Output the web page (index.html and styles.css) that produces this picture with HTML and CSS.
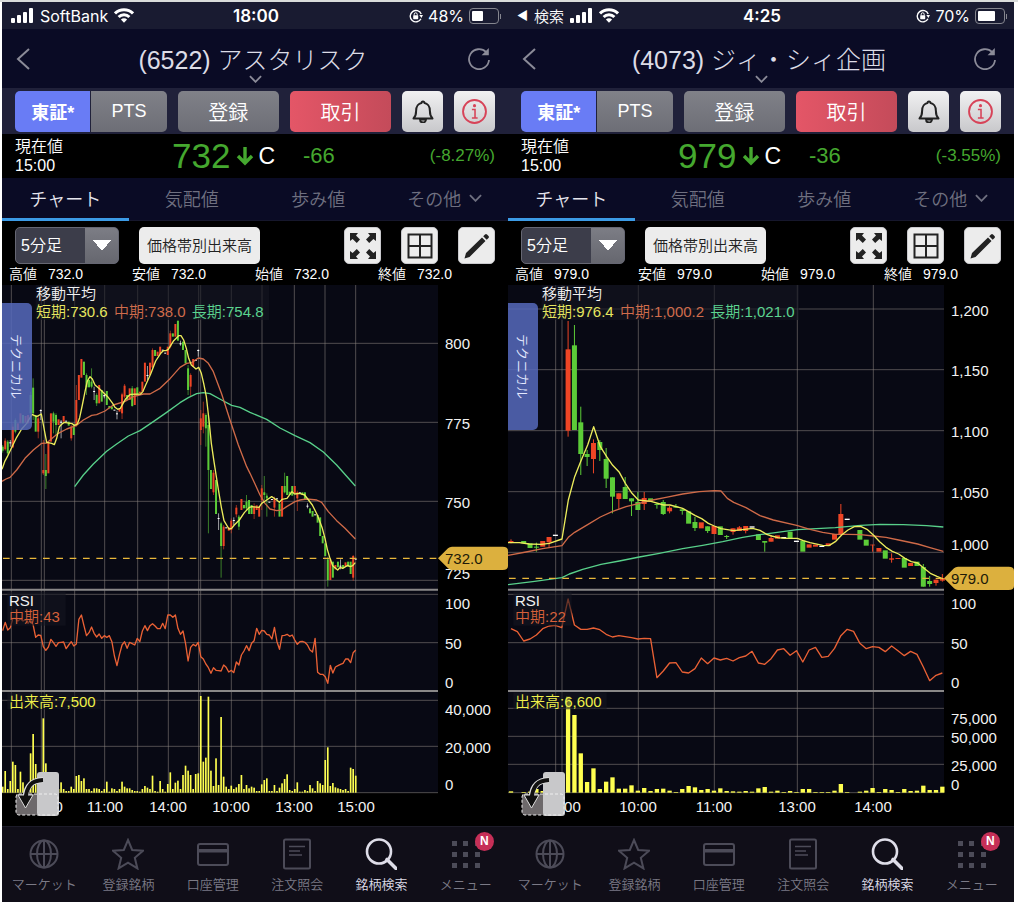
FILE: index.html
```html
<!DOCTYPE html>
<html lang="ja">
<head>
  <meta charset="UTF-8" />
  <meta name="viewport" content="width=device-width, initial-scale=1" />
  <title>株価チャート</title>
  <link rel="stylesheet" href="styles.css">
</head>
<body>

  <svg class="defs" aria-hidden="true">
    <symbol id="signal" viewBox="0 0 23 15">
      <rect x="0" y="10" width="4" height="5" rx="1"/><rect x="6" y="7" width="4" height="8" rx="1"/>
      <rect x="12" y="4" width="4" height="11" rx="1"/><rect x="18" y="0" width="4" height="15" rx="1"/>
    </symbol>
    <symbol id="wifi" viewBox="0 0 20 15">
      <g fill="none" stroke="currentColor" stroke-width="3"><path d="M1 5.4a12.8 12.8 0 0 1 18 0"/><path d="M4.6 9a7.8 7.8 0 0 1 10.8 0"/></g>
      <path d="M10 14.8 6.9 11.6a4.4 4.4 0 0 1 6.2 0z"/>
    </symbol>
    <symbol id="lock" viewBox="0 0 14 14">
      <path d="M12.2 5A5.7 5.7 0 1 0 12 9.8" fill="none" stroke="currentColor" stroke-width="1.4"/>
      <path d="M10.3 6h3.7l-1.6 3z"/><rect x="4.2" y="6.2" width="5" height="4" rx=".6"/>
      <path d="M5.2 6.5V5.3a1.5 1.5 0 0 1 3 0v1.2" fill="none" stroke="currentColor"/>
    </symbol>
    <symbol id="back" viewBox="0 0 14 22"><path d="M13 1 2 11l11 10" fill="none" stroke="currentColor" stroke-width="2"/></symbol>
    <symbol id="down" viewBox="0 0 14 8"><path d="M1 1l6 6 6-6" fill="none" stroke="currentColor" stroke-width="2"/></symbol>
    <symbol id="reload" viewBox="0 0 22 22">
      <path d="M18.2 4.2A10 10 0 1 0 21 12" fill="none" stroke="currentColor" stroke-width="1.8"/>
      <path d="M20.8 0v7.2h-7.2z"/>
    </symbol>
    <symbol id="bell" viewBox="0 0 22 24">
      <path d="M1.5 19.5c2-2 2.6-3.4 2.6-7.5 0-4.7 2.6-7.6 5.4-8a1.5 1.5 0 1 1 3 0c2.8.4 5.4 3.3 5.4 8 0 4.1.6 5.5 2.6 7.5z" fill="none" stroke="currentColor" stroke-width="2" stroke-linejoin="round"/>
      <path d="M8 20.5a3 3 0 0 0 6 0z" fill="none" stroke="currentColor" stroke-width="1.8"/>
    </symbol>
    <symbol id="info" viewBox="0 0 24 24">
      <circle cx="12" cy="12" r="11" fill="none" stroke="currentColor" stroke-width="1.8"/>
      <circle cx="12" cy="6.4" r="1.5"/><path d="M9.5 10h3v8M9.5 18.2h5.5" fill="none" stroke="currentColor" stroke-width="1.5"/>
    </symbol>
    <symbol id="drop" viewBox="0 0 18 19"><path d="M9 0v16M2 9l7 7 7-7" fill="none" stroke="currentColor" stroke-width="3.4"/></symbol>
    <symbol id="expand" viewBox="0 0 26 26">
      <g id="arrow"><path d="M0 0h8L6 2.4l4 4.2L6.8 10 2.6 6 0 8z"/></g>
      <use href="#arrow" transform="translate(26 0) scale(-1 1)"/><use href="#arrow" transform="translate(0 26) scale(1 -1)"/><use href="#arrow" transform="translate(26 26) scale(-1 -1)"/>
    </symbol>
    <symbol id="grid" viewBox="0 0 26 26"><path d="M1.5 1.5h23v23h-23zM13 2v22M2 13h22" fill="none" stroke="currentColor" stroke-width="2"/></symbol>
    <symbol id="pencil" viewBox="0 0 26 26"><path d="M.5 25.5L2 20 18 4.5 21.5 8l-16 16zM19.2 3.3L21 1.5a1.500 1.500 0 0 1 2 0L24.500 3a1.500 1.500 0 0 1 0 2l-1.800 1.800z"/></symbol>
    <symbol id="globe" viewBox="0 0 32 32">
      <g fill="none" stroke="currentColor" stroke-width="2"><circle cx="16" cy="16" r="13.5"/><ellipse cx="16" cy="16" rx="7" ry="13.5"/><path d="M16 2.5v27M2.5 16h27"/></g>
    </symbol>
    <symbol id="star" viewBox="0 0 32 32"><path d="M16 2l4.2 10 10.8.8-8.2 7 2.6 10.6L16 24.6l-9.4 5.8 2.6-10.6-8.2-7 10.8-.8z" fill="none" stroke="currentColor" stroke-width="2"/></symbol>
    <symbol id="card" viewBox="0 0 32 32"><rect x="1" y="6" width="30" height="21" rx="2" fill="none" stroke="currentColor" stroke-width="2"/><path d="M1 11h30v3.5H1z"/></symbol>
    <symbol id="note" viewBox="0 0 32 32">
      <rect x="3" y="1.5" width="26" height="29" rx="1.5" fill="none" stroke="currentColor" stroke-width="2"/>
      <path d="M8 8.5h16M8 13h11M8 17h13" fill="none" stroke="currentColor" stroke-width="1.5"/>
    </symbol>
    <symbol id="search" viewBox="0 0 32 32">
      <circle cx="14" cy="13.5" r="12" fill="none" stroke="currentColor" stroke-width="2.6"/>
      <path d="M22 21.5l9 9" fill="none" stroke="currentColor" stroke-width="3.6" stroke-linecap="round"/>
    </symbol>
    <symbol id="menu" viewBox="0 0 32 32">
      <path d="M2 3h5v5H2zM13 3h5v5h-5zM25 3h5v5h-5zM2 14h5v5H2zM13 14h5v5h-5zM25 14h5v5h-5zM2 25h5v5H2zM13 25h5v5h-5zM25 25h5v5h-5z"/>
    </symbol>
    <symbol id="rotate" viewBox="0 0 44 44">
      <path d="M1 22h21v21H4q-3 0-3-3z" fill="#6d696b"/>
      <rect x="22" y="0" width="22" height="44" rx="3" fill="#c8c8ca"/>
      <rect x="1" y="22" width="42" height="21" rx="3" fill="none" stroke="#eee" stroke-dasharray="3 2"/>
      <path d="M28 8C17 8.5 11.5 13 10.5 25" fill="none" stroke="#ddd" stroke-width="6"/>
      <path d="M3 23L10.500 36 18 23z" fill="#111" stroke="#ddd"/>
      <path d="M28 8C17 8.5 11.5 13 10.5 28" fill="none" stroke="#111" stroke-width="4"/>
    </symbol>
  </svg>

  <main class="screens">

    <section class="phone">
      <div class="status">
        <div class="status-left">
          <svg class="signal"><use href="#signal"/></svg>
          <span>SoftBank</span>
          <svg class="wifi"><use href="#wifi"/></svg>
        </div>
        <b>18:00</b>
        <div class="status-right">
          <svg class="lock"><use href="#lock"/></svg>
          <span>48%</span>
          <span class="battery"><i style="width: 46%"></i></span>
        </div>
      </div>

      <header class="title">
        <button class="plain" aria-label="戻る"><svg class="back"><use href="#back"/></svg></button>
        <h1>(6522) アスタリスク</h1>
        <button class="plain end" aria-label="更新"><svg class="reload"><use href="#reload"/></svg></button>
        <svg class="title-down"><use href="#down"/></svg>
      </header>

      <div class="actions">
        <div class="market">
          <button class="on">東証*</button>
          <button>PTS</button>
        </div>
        <button class="btn">登録</button>
        <button class="btn trade">取引</button>
        <button class="btn square" aria-label="通知"><svg class="bell"><use href="#bell"/></svg></button>
        <button class="btn square info" aria-label="情報"><svg class="info-icon"><use href="#info"/></svg></button>
      </div>

      <div class="price">
        <div class="price-label">現在値<br>15:00</div>
        <div class="price-now"><strong>732</strong><svg class="drop"><use href="#drop"/></svg><span>C</span></div>
        <div class="price-diff">-66</div>
        <div class="price-rate">(-8.27%)</div>
      </div>

      <nav class="tabs">
        <a href="#" class="on">チャート</a>
        <a href="#">気配値</a>
        <a href="#">歩み値</a>
        <a href="#">その他 <svg class="down"><use href="#down"/></svg></a>
      </nav>

      <div class="tools">
        <select aria-label="足種"><option>5分足</option></select>
        <button class="tool wide">価格帯別出来高</button>
        <button class="tool icon first" aria-label="全画面"><svg><use href="#expand"/></svg></button>
        <button class="tool icon" aria-label="分割"><svg><use href="#grid"/></svg></button>
        <button class="tool icon" aria-label="描画"><svg><use href="#pencil"/></svg></button>
      </div>

      <dl class="ohlc">
        <div><dt>高値</dt><dd>732.0</dd></div>
        <div><dt>安値</dt><dd>732.0</dd></div>
        <div><dt>始値</dt><dd>732.0</dd></div>
        <div><dt>終値</dt><dd>732.0</dd></div>
      </dl>

      <div class="chart">
        <svg id="chart-6522" viewBox="2 5 506 541"></svg>
        <button class="technical">テクニカル</button>
        <button class="rotate" aria-label="画面回転"><svg><use href="#rotate"/></svg></button>
      </div>

      <nav class="menu">
        <a href="#"><svg><use href="#globe"/></svg>マーケット</a>
        <a href="#"><svg><use href="#star"/></svg>登録銘柄</a>
        <a href="#"><svg><use href="#card"/></svg>口座管理</a>
        <a href="#"><svg><use href="#note"/></svg>注文照会</a>
        <a href="#" class="on"><svg><use href="#search"/></svg>銘柄検索</a>
        <a href="#"><svg><use href="#menu"/></svg>メニュー<span class="badge">N</span></a>
      </nav>
    </section>

    <section class="phone">
      <div class="status">
        <div class="status-left">
          <span class="return">◀</span>
          <span class="return-label">検索</span>
          <svg class="signal"><use href="#signal"/></svg>
          <svg class="wifi"><use href="#wifi"/></svg>
        </div>
        <b>4:25</b>
        <div class="status-right">
          <svg class="lock"><use href="#lock"/></svg>
          <span>70%</span>
          <span class="battery"><i style="width: 70%"></i></span>
        </div>
      </div>

      <header class="title">
        <button class="plain" aria-label="戻る"><svg class="back"><use href="#back"/></svg></button>
        <h1>(4073) ジィ・シィ企画</h1>
        <button class="plain end" aria-label="更新"><svg class="reload"><use href="#reload"/></svg></button>
        <svg class="title-down"><use href="#down"/></svg>
      </header>

      <div class="actions">
        <div class="market">
          <button class="on">東証*</button>
          <button>PTS</button>
        </div>
        <button class="btn">登録</button>
        <button class="btn trade">取引</button>
        <button class="btn square" aria-label="通知"><svg class="bell"><use href="#bell"/></svg></button>
        <button class="btn square info" aria-label="情報"><svg class="info-icon"><use href="#info"/></svg></button>
      </div>

      <div class="price">
        <div class="price-label">現在値<br>15:00</div>
        <div class="price-now"><strong>979</strong><svg class="drop"><use href="#drop"/></svg><span>C</span></div>
        <div class="price-diff">-36</div>
        <div class="price-rate">(-3.55%)</div>
      </div>

      <nav class="tabs">
        <a href="#" class="on">チャート</a>
        <a href="#">気配値</a>
        <a href="#">歩み値</a>
        <a href="#">その他 <svg class="down"><use href="#down"/></svg></a>
      </nav>

      <div class="tools">
        <select aria-label="足種"><option>5分足</option></select>
        <button class="tool wide">価格帯別出来高</button>
        <button class="tool icon first" aria-label="全画面"><svg><use href="#expand"/></svg></button>
        <button class="tool icon" aria-label="分割"><svg><use href="#grid"/></svg></button>
        <button class="tool icon" aria-label="描画"><svg><use href="#pencil"/></svg></button>
      </div>

      <dl class="ohlc">
        <div><dt>高値</dt><dd>979.0</dd></div>
        <div><dt>安値</dt><dd>979.0</dd></div>
        <div><dt>始値</dt><dd>979.0</dd></div>
        <div><dt>終値</dt><dd>979.0</dd></div>
      </dl>

      <div class="chart">
        <svg id="chart-4073" viewBox="2 5 506 541"></svg>
        <button class="technical">テクニカル</button>
        <button class="rotate" aria-label="画面回転"><svg><use href="#rotate"/></svg></button>
      </div>

      <nav class="menu">
        <a href="#"><svg><use href="#globe"/></svg>マーケット</a>
        <a href="#"><svg><use href="#star"/></svg>登録銘柄</a>
        <a href="#"><svg><use href="#card"/></svg>口座管理</a>
        <a href="#"><svg><use href="#note"/></svg>注文照会</a>
        <a href="#" class="on"><svg><use href="#search"/></svg>銘柄検索</a>
        <a href="#"><svg><use href="#menu"/></svg>メニュー<span class="badge">N</span></a>
      </nav>
    </section>

  </main>

  <script src="chart.js"></script>
</body>
</html>
```
FILE: styles.css
```css
* {
  box-sizing: border-box;
}
body {
  margin: 0;
  padding: 0 4px 0 2px;
  border-top: 2px solid #d9dcdb;
  background: #fff;
  color: #fff;
  font-family: "Liberation Sans", "Noto Sans CJK JP", sans-serif;
  font-weight: 350;
}
button, select {
  font-family: inherit;
  font-weight: inherit;
  border: none;
  padding: 0;
  cursor: pointer;
}
a {
  color: inherit;
  text-decoration: none;
}
svg {
  display: block;
  fill: currentColor;
}
.defs {
  position: absolute;
  width: 0;
  height: 0;
}
.screens {
  display: grid;
  grid-template-columns: 1fr 1fr;
}
.phone {
  min-width: 0;
  background: #000;
}

/* status bar */
.status {
  display: grid;
  grid-template-columns: 1fr auto 1fr;
  align-items: center;
  height: 27px;
  padding: 0 7px 0 9px;
  background: #191b31;
  font-family: Inter, "Noto Sans CJK JP", sans-serif;
  font-size: 16px;
  font-weight: 400;
}
.status b {
  font-size: 17px;
  font-weight: 600;
}
.status-left, .status-right {
  display: flex;
  align-items: center;
  gap: 6px;
}
.status-right {
  justify-content: flex-end;
  gap: 5px;
}
.return {
  font-size: 12px;
}
.return-label {
  font-size: 15px;
  font-weight: 350;
}
.signal {
  width: 23px;
  height: 15px;
}
.wifi {
  width: 20px;
  height: 15px;
}
.lock {
  width: 14px;
  height: 14px;
}
.battery {
  position: relative;
  width: 30px;
  height: 16px;
  padding: 2px;
  margin-right: 2px;
  border: 1px solid #85868f;
  border-radius: 4px;
}
.battery i {
  display: block;
  height: 100%;
  background: #fff;
  border-radius: 1px;
}
.battery::after {
  content: "";
  position: absolute;
  top: 5px;
  right: -3px;
  width: 1px;
  height: 5px;
  background: #85868f;
}

/* title */
.title {
  position: relative;
  display: flex;
  align-items: center;
  justify-content: space-between;
  height: 59px;
  padding: 0 18px 0 14px;
  background: #0a0b25;
}
.title h1 {
  margin: 0;
  padding-bottom: 2px;
  font-size: 25px;
  font-weight: 300;
  color: #dcdce6;
}
.plain {
  display: flex;
  width: 28px;
  background: none;
  color: #8b8b98;
}
.plain.end {
  justify-content: flex-end;
}
.back {
  width: 14px;
  height: 22px;
}
.reload {
  width: 22px;
  height: 22px;
}
.title-down {
  position: absolute;
  left: 50%;
  bottom: 5px;
  width: 13px;
  height: 8px;
  margin-left: -6px;
  color: #8b8b98;
}

/* buttons */
.actions {
  display: flex;
  align-items: center;
  gap: 11px;
  height: 46px;
  padding: 0 13px;
  background: #20213a;
}
.market {
  display: flex;
  flex: 3 1 0;
  gap: 1px;
  height: 41px;
}
.market button, .btn {
  flex: 2 1 0;
  height: 41px;
  border-radius: 5px;
  background: linear-gradient(#808188, #6d6e76);
  color: #fff;
  font-size: 20px;
}
.market button {
  flex: 1 1 0;
  border-radius: 0 5px 5px 0;
  font-size: 18px;
}
.market .on {
  border-radius: 5px 0 0 5px;
  background: #697cf5;
  font-weight: bold;
}
.btn.trade {
  background: linear-gradient(90deg, #e45667, #c44b5a);
}
.btn.square {
  display: flex;
  flex: 0 0 41px;
  align-items: center;
  justify-content: center;
  background: linear-gradient(#f1f1f2, #c8c8cb);
  color: #222;
}
.btn.info {
  color: #d74358;
}
.bell {
  width: 22px;
  height: 24px;
}
.info-icon {
  width: 25px;
  height: 25px;
}

/* current price */
.price {
  display: grid;
  grid-template-columns: 157fr 131fr 96fr 96fr;
  align-items: center;
  height: 44px;
  padding: 0 13px;
  color: #45a82f;
}
.price-label {
  color: #fff;
  font-size: 16px;
  line-height: 19px;
}
.price-now {
  display: flex;
  align-items: center;
  font-size: 23px;
}
.price-now strong {
  font-size: 35px;
  font-weight: normal;
}
.price-now span {
  color: #fff;
}
.drop {
  width: 18px;
  height: 19px;
  margin: 0 4px 0 6px;
}
.price-diff {
  font-size: 22px;
}
.price-rate {
  font-size: 17px;
  text-align: right;
}

/* tabs */
.tabs {
  display: grid;
  grid-template-columns: repeat(4, 1fr);
  height: 43px;
  background: #0a0b25;
  border-bottom: 1px solid #16172c;
  color: #6f7080;
  font-size: 18px;
}
.tabs a {
  display: flex;
  align-items: center;
  justify-content: center;
  gap: 8px;
  height: 43px;
  border-bottom: 3px solid transparent;
}
.tabs .on {
  color: #e6e6ee;
  border-color: #3c9be6;
}
.down {
  width: 13px;
  height: 8px;
}

/* chart tools */
.tools {
  display: flex;
  align-items: center;
  gap: 20px;
  height: 43px;
  padding: 6px 13px 0;
}
.tools select {
  width: 104px;
  height: 37px;
  padding-left: 5px;
  appearance: none;
  border: 1px solid #666773;
  border-radius: 5px;
  background:
    linear-gradient(to top left, transparent 50%, #fff 0) right 7px center / 9px 11px no-repeat,
    linear-gradient(to top right, transparent 50%, #fff 0) right 16px center / 9px 11px no-repeat,
    linear-gradient(#7c7d85, #66676f) right / 33px 100% no-repeat,
    #3c3d4a;
  color: #fff;
  font-size: 16px;
}
.tool {
  display: flex;
  align-items: center;
  justify-content: center;
  height: 37px;
  border-radius: 5px;
  background: #ececec;
  color: #222;
}
.tool.wide {
  padding: 0 8px 2px;
  font-size: 15px;
}
.tool.icon {
  width: 37px;
  border: 1px solid #c9c9cd;
}
.tool.first {
  margin-left: auto;
}
.tool.icon svg {
  width: 26px;
  height: 26px;
}
.ohlc {
  display: grid;
  grid-template-columns: repeat(4, 1fr);
  height: 21px;
  margin: 0;
  padding: 0 7px;
  font-size: 14px;
  line-height: 21px;
}
.ohlc div {
  display: flex;
  gap: 11px;
}
.ohlc dd {
  margin: 0;
}

/* chart */
.chart {
  position: relative;
}
.chart > svg {
  width: 100%;
  height: auto;
}
.plot {
  fill: #080914;
}
.grid {
  fill: none;
  stroke: #8a8580;
  stroke-opacity: .55;
  stroke-width: 3;
}
.separator {
  stroke: #8a8888;
  stroke-width: 6;
}
.line {
  fill: none;
  stroke-width: 4;
  stroke-linejoin: round;
}
.short { stroke: #ecec5c; }
.middle { stroke: #cf6a48; }
.long { stroke: #58d08a; }
.rsi { stroke: #ea6135; }
.up { fill: #ee4525; }
.fall { fill: #5ccc38; }
.flat { fill: #fff; }
.volume { fill: #ffff50; }
.last {
  stroke: #e9b83a;
  stroke-width: 4;
  stroke-dasharray: 20 20;
}
.legend-box {
  fill: #14161f;
  fill-opacity: .6;
}
.chart text {
  font-size: 15px;
  fill: #f2f2f2;
}
.chart .center { text-anchor: middle; }
.chart .t-short { fill: #e6e660; }
.chart .t-middle { fill: #d06c4c; }
.chart .t-long { fill: #5cd490; }
.chart .t-rsi { fill: #d6603a; }
.chart .t-volume { fill: #f0f04a; }
.chart .t-last { fill: #201a08; }
.tag { fill: #dcb03e; }
.technical {
  position: absolute;
  top: 18px;
  left: 0;
  width: 30px;
  height: 127px;
  border-radius: 0 5px 5px 0;
  background: rgba(86, 106, 188, .85);
  color: #e4e9ff;
  font-size: 13px;
  writing-mode: vertical-rl;
  text-orientation: sideways;
}
.rotate {
  position: absolute;
  left: 13px;
  bottom: 10px;
  background: none;
}
.rotate svg {
  width: 44px;
  height: 44px;
}

/* bottom menu */
.menu {
  display: grid;
  grid-template-columns: repeat(6, 1fr);
  height: 76px;
  background: #100e18;
  border-top: 1px solid #1c1b28;
  font-size: 13px;
}
.menu a {
  position: relative;
  display: flex;
  flex-direction: column;
  align-items: center;
  gap: 5px;
  padding-top: 11px;
  line-height: 20px;
  white-space: nowrap;
  color: #7b7a86;
}
.menu svg {
  width: 32px;
  height: 32px;
  color: #4c4b58;
}
.menu .on, .menu .on svg {
  color: #dedde8;
}
.badge {
  position: absolute;
  top: 5px;
  left: 50%;
  width: 19px;
  height: 19px;
  margin-left: 9px;
  border-radius: 50%;
  background: #c62f57;
  color: #fff;
  font-size: 12px;
  font-weight: bold;
  line-height: 19px;
  text-align: center;
}
```
FILE: chart.js
```javascript
// Series are kept in device pixels, 3 for each css pixel.
const K = 3;
const RIGHT = 1314;
const BOTTOM = 1538;

// candle: colour (r up, g down, w flat) + top,bottom[,high,low]; "-" is no trade
const asterisk = {
  id: "chart-6522", x0: 8, pitch: 7.62, body: 6, bar: 5, wick: .6,
  cols: [34, 124, 133, 224, 314, 413, 505, 596, 602, 694, 786, 883, 975, 1067],
  rows: [190, 427, 664, 901, 943, 1088, 1261, 1399, 1538],
  prices: [["800", 207], ["775", 447], ["750", 683], ["725", 897]],
  volumes: [["40,000", 1306], ["20,000", 1418], ["0", 1530]],
  times: [["09:00", 133], ["11:00", 314], ["14:00", 505], ["10:00", 694], ["13:00", 883], ["15:00", 1067]],
  last: ["732.0", 835],
  legend: ["短期:730.6", "中期:738.0", "長期:754.8"], legendWidth: 700,
  rsiText: "中期:43", volumeText: "出来高:7,500",
  candles: `g500,512,495,518 r482,508,475,512 g485,520,480,524 w487,490,480,500 r440,502,430,505 g420,455,415,460 r430,450
    r400,430 g405,430 r408,428 r405,430 g345,400,335,430 g323,400,295,420 g405,455 r415,455,405,475 w390,393,388,420
    r570,580,480,585 g570,588,522,627 r485,580 r400,485 g400,425,395,460 g405,435,400,465 r418,435 w425,428,420,475
    r408,425 w422,425 g425,437 r440,475,435,482 g435,465 r360,435,315,440 r285,360 r237,293 g245,285 g285,322,280,345
    g300,322 g305,320,265,325 w333,336,320,360 g345,370,340,378 r315,370 g330,365 w345,349,340,355 g333,375 g378,385
    g380,388 w389,392 w400,403,392,418 r385,395 r343,400,338,417 r317,350,312,355 g345,360 r325,360 g325,378,318,380
    r325,375 g322,345 r335,340 r305,335 r248,305 w285,288,258,300 r248,285 r210,262,205,265 g210,228 r215,228 r200,222
    w209,212 w218,221 r200,225 r160,200,152,205 g160,170 r132,170 g122,182 w190,193,182,197 g185,210 g210,250
    g265,330,255,345 r285,320,280,348 r237,260 w240,243 w210,213,208,230 r415,450,390,495 r400,440,365,460 g405,445,400,500
    g435,570,400,760 g570,627 r578,637,570,645 g600,702 w714,717,700,750 g730,798,725,893 r740,798,735,808 w742,745
    r742,752 r722,750,715,760 w720,723,712,735 r683,703,675,712 g710,740,705,750 r657,690 g675,685 g665,685,645,690
    g660,702 g675,702 r680,702,670,717 r676,690 r680,710 r625,660,615,690
    g637,645,588,660 g647,655,640,710 w665,668 w657,660 r657,683,650,710 w655,658 g670,710 r618,710 g618,637,578,640
    g588,645 g635,645 g618,647 r618,640 r637,655,632,693 w637,640 g637,645 g637,660 w677,680,670,685 g685,700 g693,710
    w703,706 g705,728 g712,768 g768,790 g790,828 g838,900,830,920 r838,900 g845,893 r855,868 g845,862 w857,860,838,868
    g855,865 r847,860 g845,860 g845,882 r828,893,825,902 w836,839`,
  short: "6,568 14,545 22,530 34,505 50,472 65,447 80,430 96,403 110,410 124,402 133,450 140,487 155,490 163,494 170,475 178,440 186,432 193,427 216,431 224,436 232,432 239,413 247,375 255,335 262,303 270,290 277,297 285,315 300,328 323,350 338,370 345,382 353,388 361,385 376,358 391,343 422,342 429,334 437,315 452,282 467,243 482,220 490,212 498,212 505,208 521,182 536,167 543,167 551,180 559,205 566,235 574,255 588,267 596,262 604,280 611,310 619,350 627,420 634,490 642,545 649,590 657,640 664,682 672,722 687,747 695,745 703,735 718,720 733,698 748,682 756,680 777,682 785,670 800,660 815,650 830,660 838,667 846,658 861,655 876,635 884,642 899,640 914,645 937,675 952,705 967,745 975,775 982,808 990,835 998,857 1013,870 1021,862 1028,865 1043,856 1051,860 1058,857 1066,848",
  middle: "6,604 18,597 30,592 50,570 75,535 100,510 125,490 140,489 160,472 175,460 200,447 230,436 250,420 275,406 290,404 315,393 340,375 375,364 400,350 430,342 450,342 480,325 510,296 540,262 560,250 575,248 595,234 610,237 625,250 640,275 665,342 690,420 715,495 740,560 750,580 765,612 780,645 795,670 810,687 830,692 845,690 860,680 885,665 900,660 920,657 950,660 965,667 985,695 1010,722 1035,745 1066,777",
  long: "224,620 250,585 280,552 320,514 350,492 385,468 420,452 460,425 500,397 540,368 565,353 590,341 610,338 630,341 665,360 695,376 720,382 750,397 800,418 840,444 885,467 930,488 970,516 1010,555 1066,618",
  rsi: [137, 112, 135, 128, 100, 100, 108, 102, 108, 104, 115, 104, 120, 157, 150, 151, 185, 196, 186, 163, 173, 184, 173, 172, 171, 191, 180, 170, 183, 177, 103, 90, 122, 152, 143, 126, 145, 156, 147, 160, 152, 157, 152, 170, 213, 242, 208, 180, 170, 190, 172, 176, 180, 160, 170, 138, 122, 137, 122, 116, 123, 131, 131, 115, 131, 90, 90, 97, 90, 130, 148, 138, 175, 228, 187, 178, 183, 172, 215, 222, 237, 248, 265, 248, 256, 257, 258, 240, 247, 261, 256, 263, 231, 240, 210, 198, 182, 197, 175, 167, 130, 148, 136, 138, 148, 150, 162, 127, 170, 193, 152, 151, 148, 154, 150, 165, 178, 170, 169, 172, 180, 195, 201, 160, 262, 268, 268, 275, 295, 241, 264, 246, 242, 238, 235, 222, 222, 233, 203, 195],
  volume: [18, 65, 11, 35, 93, 83, 11, 63, 31, 12, 23, 118, 176, 86, 8, 10, 223, 88, 20, 12, 8, 10, 11, 31, 11, 5, 5, 18, 11, 50, 53, 35, 43, 11, 11, 5, 13, 13, 11, 5, 11, 33, 3, 13, 11, 5, 11, 33, 18, 13, 13, 8, 5, 5, 3, 11, 20, 15, 11, 51, 5, 3, 35, 11, 3, 26, 61, 11, 30, 36, 11, 53, 81, 66, 53, 11, 56, 58, 290, 93, 105, 288, 66, 20, 103, 23, 227, 48, 18, 11, 21, 11, 16, 26, 53, 11, 23, 13, 18, 15, 5, 5, 25, 38, 43, 5, 5, 23, 5, 15, 28, 41, 55, 8, 5, 11, 31, 3, 3, 8, 5, 23, 13, 5, 35, 28, 23, 98, 136, 20, 29, 16, 13, 11, 8, 11, 5, 75, 71, 51]
};

const gck = {
  id: "chart-4073", x0: 15, pitch: 19.03, body: 15, bar: 13, wick: 1,
  cols: [149, 168, 397, 625, 874, 1102],
  rows: [87, 269, 452, 635, 817, 943, 1088, 1285, 1369, 1453, 1538],
  prices: [["1,200", 107], ["1,150", 288], ["1,100", 470], ["1,050", 653], ["1,000", 811]],
  volumes: [["75,000", 1331], ["50,000", 1390], ["25,000", 1472], ["0", 1530]],
  times: [["09:00", 168], ["10:00", 397], ["11:00", 625], ["13:00", 874], ["14:00", 1102]],
  last: ["979.0", 895],
  legend: ["短期:976.4", "中期:1,000.2", "長期:1,021.0"], legendWidth: 772,
  rsiText: "中期:22", volumeText: "出来高:6,600",
  candles: `r783,788,778,790 - g783,790 g790,804 g800,803,788,815 r783,800 r771,787,771,803 w764,768 - r208,452,123,470
    g196,450,135,450 g427,522,380,585 g522,531,510,558 r489,537,478,580 g486,510,480,543 g537,596,504,624 g592,650,592,700
    r640,657,640,686 g621,657,591,657 g655,664,655,708 g666,690,636,690 r654,672,636,690 g655,663 g672,675,670,686
    g666,702,660,705 r683,694,678,700 g679,683,672,683 g688,693,685,704 g694,731 g726,744,711,753 r727,745 g739,753,739,759
    r738,762 g739,765 g768,771,765,777 r745,756,745,764 r742,753,738,753 r738,753,738,760 w739,743 g763,780 g783,788,783,815
    r774,785,765,785 r766,776 w771,775 g755,776 w782,786 g782,815 r793,803 r794,800 w797,801 r790,798 r762,779
    r702,762,672,762 w716,720 - g750,779 g779,797 r794,796,794,815 r804,815 g811,836 r835,839,820,848 r834,837 g834,863
    r849,858 g845,858 g861,920,852,920 g903,912,888,920 r899,909,899,917 r894,902,882,905`,
  short: "6,788 40,788 70,792 105,793 130,790 168,777 187,660 206,590 225,542 245,495 263,440 283,500 302,530 320,556 340,577 358,610 378,640 397,660 435,664 473,675 492,675 530,685 568,707 587,716 607,730 625,738 645,746 683,752 740,745 762,751 782,763 797,768 816,773 835,775 874,775 892,782 912,788 950,796 969,797 988,785 1007,765 1026,750 1045,740 1064,739 1083,748 1102,765 1121,785 1140,802 1159,814 1178,822 1197,835 1216,845 1235,849 1254,865 1273,880 1293,889 1312,897",
  middle: "6,826 60,816 110,806 168,797 187,772 206,757 245,734 283,711 320,694 360,680 400,670 440,660 480,652 530,642 580,635 625,632 645,633 664,655 683,667 720,683 762,707 802,720 872,736 912,748 950,757 988,763 1026,763 1064,764 1102,768 1140,772 1178,780 1235,792 1272,803 1312,814",
  long: "6,914 80,905 168,893 190,882 230,868 285,853 340,843 400,831 460,820 530,806 590,796 650,785 710,772 760,764 792,760 874,749 988,743 1064,736 1122,733 1192,734 1262,737 1312,741",
  rsi: [131, 140, 168, 162, 150, 131, 123, 121, 128, 42, 120, 133, 133, 129, 134, 148, 156, 152, 155, 158, 162, 160, 161, 278, 258, 234, 233, 261, 264, 251, 219, 236, 219, 225, 220, 228, 218, 213, 199, 234, 238, 221, 195, 191, 211, 197, 231, 195, 187, 217, 214, 190, 152, 133, 139, 175, 191, 185, 187, 200, 183, 197, 212, 199, 208, 246, 287, 271, 264],
  volume: [4, 0, 2, 3, 11, 5, 3, 3, 0, 288, 233, 118, 32, 73, 11, 33, 46, 12, 12, 22, 6, 14, 5, 11, 12, 6, 2, 11, 20, 16, 8, 11, 6, 13, 5, 4, 3, 5, 3, 13, 17, 3, 6, 2, 5, 2, 11, 11, 2, 2, 2, 6, 26, 2, 0, 3, 6, 14, 2, 11, 8, 2, 11, 5, 6, 21, 8, 8, 18]
};

function rect(cls, x, y, w, h) {
  return `<rect class="${cls}" x="${x}" y="${y}" width="${w}" height="${h}"/>`;
}

function line(cls, x1, y1, x2, y2) {
  return `<line class="${cls}" x1="${x1}" y1="${y1}" x2="${x2}" y2="${y2}"/>`;
}

function text(cls, x, y, value) {
  return `<text class="${cls}" x="${Math.round(x / K)}" y="${Math.round(y / K)}">${value}</text>`;
}

function drawCandles(c) {
  const names = { r: "up", g: "fall", w: "flat" };
  let out = "";
  c.candles.trim().split(/\s+/).forEach((item, i) => {
    if (item === "-") return;
    const x = c.x0 + c.pitch * i;
    const [top, bottom, high, low] = item.slice(1).split(",").map(Number);
    const cls = names[item[0]];
    if (high) out += `<g opacity="${c.wick}">${rect(cls, x - 1.5, high, 3, low - high)}</g>`;
    out += rect(cls, x - c.body / 2, top, c.body, bottom - top);
  });
  return out;
}

function draw(c) {
  const mid = c.last[1];
  const rsi = c.rsi.map((y, i) => `${c.x0 + c.pitch * i},${y + 915}`).join(" ");
  let shapes = rect("plot", 6, 15, RIGHT - 6, BOTTOM - 15);

  c.cols.forEach(x => shapes += line("grid", x, 15, x, BOTTOM));
  c.rows.forEach(y => shapes += line("grid", 6, y, RIGHT, y));
  shapes += drawCandles(c);
  ["long", "middle", "short"].forEach(name => shapes += `<polyline class="line ${name}" points="${c[name]}"/>`);
  shapes += `<polyline class="line rsi" points="${rsi}"/>`;
  c.volume.forEach((h, i) => shapes += rect("volume", c.x0 + c.pitch * i - c.bar / 2, BOTTOM - h, c.bar, h));
  shapes += line("separator", 6, 929, RIGHT, 929) + line("separator", 6, 1233, RIGHT, 1233);
  shapes += line("last", 9, mid, RIGHT, mid);
  shapes += rect("legend-box", 107, 15, c.legendWidth, 105);
  shapes += rect("legend-box", 22, 935, 175, 102) + rect("legend-box", 22, 1237, 280, 51);

  let labels = "";
  c.prices.concat([["100", 987], ["50", 1107], ["0", 1224]], c.volumes)
    .forEach(([value, y]) => labels += text("", 1334, y, value));
  c.times.forEach(([value, x]) => labels += text("center", x, 1595, value));
  labels += text("", 108, 57, "移動平均");
  labels += `<text x="36" y="37"><tspan class="t-short">${c.legend[0]}</tspan>
    <tspan class="t-middle" dx="2">${c.legend[1]}</tspan>
    <tspan class="t-long" dx="2">${c.legend[2]}</tspan></text>`;
  labels += text("", 27, 978, "RSI") + text("t-rsi", 27, 1027, c.rsiText) + text("t-volume", 27, 1281, c.volumeText);

  const tag = `<path class="tag" d="M${RIGHT} ${mid}l30-30q5-5 12-5h152q16 0 16 12v46q0 12-16 12h-152q-7 0-12-5z"/>`;
  document.getElementById(c.id).innerHTML =
    `<g transform="scale(${1 / K})">${shapes}</g>${labels}<g transform="scale(${1 / K})">${tag}</g>` +
    text("t-last", 1334, mid + 17, c.last[0]);
}

draw(asterisk);
draw(gck);
```
